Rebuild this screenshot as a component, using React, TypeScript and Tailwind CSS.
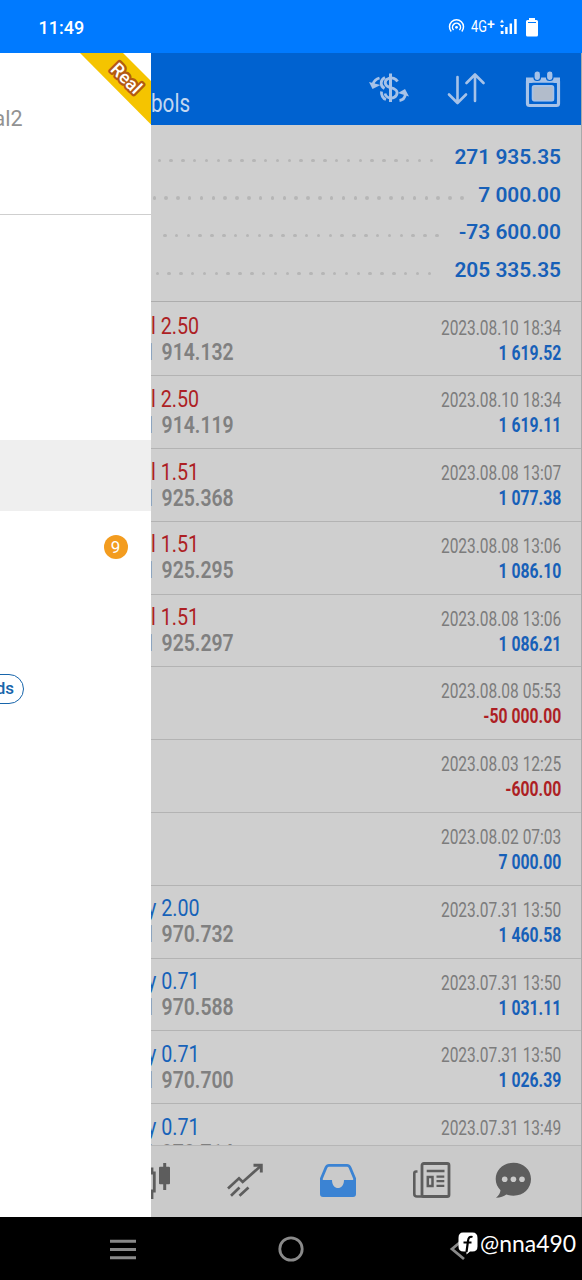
import type { ReactNode } from 'react'

type Deal = {
  side?: 'sell' | 'buy'
  lots?: string
  price?: string
  time: string
  profit: string
}

const summary = [
  { value: '271 935.35', start: 6.5, dots: 24 },
  { value: '7 000.00', start: 1.5, dots: 27 },
  { value: '-73 600.00', start: 12, dots: 24 },
  { value: '205 335.35', start: 4.5, dots: 24 },
]

const deals: Deal[] = [
  { side: 'sell', lots: '2.50', price: '914.132', time: '2023.08.10 18:34', profit: '1 619.52' },
  { side: 'sell', lots: '2.50', price: '914.119', time: '2023.08.10 18:34', profit: '1 619.11' },
  { side: 'sell', lots: '1.51', price: '925.368', time: '2023.08.08 13:07', profit: '1 077.38' },
  { side: 'sell', lots: '1.51', price: '925.295', time: '2023.08.08 13:06', profit: '1 086.10' },
  { side: 'sell', lots: '1.51', price: '925.297', time: '2023.08.08 13:06', profit: '1 086.21' },
  { time: '2023.08.08 05:53', profit: '-50 000.00' },
  { time: '2023.08.03 12:25', profit: '-600.00' },
  { time: '2023.08.02 07:03', profit: '7 000.00' },
  { side: 'buy', lots: '2.00', price: '970.732', time: '2023.07.31 13:50', profit: '1 460.58' },
  { side: 'buy', lots: '0.71', price: '970.588', time: '2023.07.31 13:50', profit: '1 031.11' },
  { side: 'buy', lots: '0.71', price: '970.700', time: '2023.07.31 13:50', profit: '1 026.39' },
  { side: 'buy', lots: '0.71', price: '970.714', time: '2023.07.31 13:49', profit: '1 024.12' },
]

function StatusBar() {
  return (
    <div className="flex h-[53px] shrink-0 items-center bg-[#007aff] pl-[38.5px] text-white">
      <span className="w-[409px] pt-[2px] text-[18px] font-medium">11:49</span>
      <svg width="17" height="17" viewBox="0 0 17 17" fill="none" stroke="white" strokeWidth="1.5">
        <path d="M3.2 13.4A7 7 0 1 1 13.8 13.4" />
        <path d="M5.6 12A4 4 0 1 1 11.4 12" />
        <circle cx="8.5" cy="9.3" r="1.4" fill="white" stroke="none" />
      </svg>
      <span className="ml-[6px] flex w-[25px] items-center pt-px text-[16px]">
        <span className="w-[16.5px]">
          <span className="inline-block origin-left scale-x-[0.8] whitespace-nowrap">4G</span>
        </span>
        <span className="-mt-[7px] text-[14px] leading-none font-medium">+</span>
      </span>
      <svg className="ml-[4px]" width="18" height="17" viewBox="0 0 18 17" fill="white">
        <path d="M0 4.5 2 1.5 4 4.5ZM0 7 2 10 4 7ZM.7 13h2.8v3H.7ZM5.2 9h2.4v7H5.2ZM9.6 5.5H12V16H9.6ZM14.2 1h2.5v15h-2.5Z" />
      </svg>
      <svg className="ml-[7px]" width="14" height="20" viewBox="0 0 14 20" fill="white">
        <path d="M4 1h6v2h1.500A1.500 1.500 0 0 1 13 4.500V18a1.500 1.500 0 0 1-1.500 1.500h-9A1.500 1.500 0 0 1 1 18V4.500A1.500 1.500 0 0 1 2.500 3H4Z" />
        <path d="M3 5.500h8" stroke="#007aff" strokeWidth="1" />
      </svg>
    </div>
  )
}

function Drawer() {
  return (
    <aside className="relative flex w-[151px] shrink-0 flex-col overflow-hidden bg-white">
      <div className="flex h-[161.500px] items-start border-b-[1.5px] border-[#cfcfcf] pt-[53px]">
        <span className="-ml-[6.500px] text-[21.500px] leading-[26px] text-[#929292]">al2</span>
      </div>
      <div className="mt-[225.500px] h-[71px] bg-[#efefef]" />
      <div className="mt-[24px] flex justify-end pr-[23.500px]">
        <span className="flex h-6 w-6 items-center justify-center rounded-full bg-[#f39c1f] pt-px text-[17px] leading-none text-white">
          9
        </span>
      </div>
      <div className="mt-[115px] -ml-10 flex h-[30px] w-16 items-center justify-end rounded-full border-[1.5px] border-[#1765ab] pr-[9px] text-[17px] font-medium text-[#1765ab]">
        ds
      </div>

      {/* Account type ribbon */}
      <svg className="absolute top-0 right-0" width="71" height="72" viewBox="0 0 71 72">
        <path d="M0 0H43L71 28V71.500Z" fill="#f5c400" />
        <text
          transform="translate(46.500 25) rotate(45)"
          textAnchor="middle"
          dominantBaseline="central"
          fontFamily="Roboto, sans-serif"
          fontSize="18"
          fontWeight="500"
          fill="white"
          stroke="#b45a12"
          strokeWidth="4.600"
          strokeLinejoin="round"
          paintOrder="stroke"
        >
          Real
        </text>
      </svg>
    </aside>
  )
}

function Header() {
  return (
    <header className="flex h-[71.500px] shrink-0 items-start bg-[#0062d0] text-[#a6c2e8]">
      <h1 className="w-[217px] pt-[35px] text-[25.500px] leading-[30px] text-[#c3d7f0]">
        <span className="inline-block origin-left scale-x-[0.81]">bols</span>
      </h1>
      <svg className="mt-[18px]" width="42" height="36" viewBox="0 0 42 36" fill="none" stroke="currentColor" strokeWidth="2.800">
        <path d="M22.500 2.500V31" strokeWidth="3" />
        <path d="M29.500 10.500C28 7.500 24 6 20.500 7.500C15.500 9.500 16.500 15 21.500 16.300C27.500 17.600 30.500 20 28.500 24C26 28.500 18.500 28 17 22.500" />
        <path d="M17 6.500C12 9 12 15 16.500 17.500M13.500 20.500C13 24 15 27.500 18 28.500" />
        <path d="M11.500 7C8 8 6 10 5 13" />
        <path d="M1 11 12.500 14 4.500 18Z" fill="currentColor" stroke="none" />
        <path d="M31.500 29.500C35 29 37 26.500 37.500 23" />
        <path d="M30 22 37 18 41 25.500Z" fill="currentColor" stroke="none" />
      </svg>
      <svg className="ml-[37px] mt-[18px]" width="38" height="36" viewBox="0 0 38 36" fill="none" stroke="currentColor" strokeWidth="2.600" strokeLinecap="round" strokeLinejoin="round">
        <path d="M10.500 6V31.500M2 23.500 10.500 32 19 23.500" />
        <path d="M28 30V4M19.500 12 28 3.500 36.500 12" />
      </svg>
      <svg className="ml-[40px] mt-[16.500px]" width="36" height="40" viewBox="0 0 36 40">
        <rect x="2.500" y="9.500" width="31" height="26" rx="2" fill="none" stroke="currentColor" strokeWidth="3.200" />
        <path d="M1 7.500H35V13H1Z" fill="currentColor" />
        <rect x="9" y="1" width="6.500" height="9.500" rx="3" fill="currentColor" stroke="#0062d0" strokeWidth="1.200" />
        <rect x="21.500" y="1" width="6.500" height="9.500" rx="3" fill="currentColor" stroke="#0062d0" strokeWidth="1.200" />
        <rect x="7.500" y="15.800" width="21" height="15" rx="2" fill="#b2bccb" stroke="currentColor" strokeWidth="1.800" />
        <rect x="5.300" y="13.800" width="25.400" height="19" rx="3" fill="none" stroke="#0062d0" strokeWidth="2" />
      </svg>
    </header>
  )
}

function Summary() {
  return (
    <section className="flex h-[177px] shrink-0 flex-col border-b border-[#adadad] pt-[13.500px] pr-[20px]">
      {summary.map(({ value, start, dots }) => (
        <div key={value} className="flex h-[37.700px] items-center">
          <div className="flex shrink-0 gap-[8.330px] pt-[7px]" style={{ marginLeft: start }}>
            {Array.from({ length: dots }, (_, i) => (
              <span key={i} className="h-[3.500px] w-[3.500px] shrink-0 rounded-full bg-[#b6b6b6]" />
            ))}
          </div>
          <span className="ml-auto pt-px text-[20.900px] leading-none font-semibold whitespace-nowrap text-[#1760b8]">
            {value}
          </span>
        </div>
      ))}
    </section>
  )
}

function DealRow({ side, lots, price, time, profit }: Deal) {
  const sell = side === 'sell'

  return (
    <div className="flex h-[72.800px] shrink-0 justify-between border-b-[1.500px] border-[#b3b3b3] pr-[20px]">
      <div className="pt-[9.500px] leading-[26px]">
        {side && (
          <>
            <p
              className={`origin-left scale-x-[0.82] whitespace-nowrap text-[24px] ${
                sell ? 'text-[#ad1f24]' : '-ml-[4px] text-[#1762b9]'
              }`}
            >
              {sell ? 'l' : 'y'} {lots}
            </p>
            <p className="-ml-[7.500px] origin-left scale-x-[0.82] text-[23.700px] font-semibold [word-spacing:2px] whitespace-nowrap text-[#808080]">
              1 {price}
            </p>
          </>
        )}
      </div>
      <div className="pt-[11px] text-right leading-[26px]">
        <p className="origin-right scale-x-[0.775] text-[20px] whitespace-nowrap text-[#7c7c7c]">{time}</p>
        <p
          className={`origin-right scale-x-[0.800] text-[19.700px] font-bold whitespace-nowrap ${
            profit.startsWith('-') ? 'text-[#ad1f24]' : 'text-[#1760b8]'
          }`}
        >
          {profit}
        </p>
      </div>
    </div>
  )
}

function TabIcon({ className, children }: { className?: string; children: ReactNode }) {
  return (
    <svg className={`shrink-0 ${className}`} width="40" height="40" viewBox="0 0 40 40" fill="none" stroke="currentColor">
      {children}
    </svg>
  )
}

function TabBar() {
  return (
    <nav className="flex h-[72px] shrink-0 border-t border-[#b6b6b6] bg-[#cacaca] pt-[14px] text-[#5d5d5d]">
      {/* Chart */}
      <TabIcon className="-ml-[18px]">
        <path d="M19 7.500V13M19 31V39M15 13H21.300V31H15Z" strokeWidth="2.800" />
        <path d="M31.700 3V30" strokeWidth="3" />
        <rect x="26" y="6.700" width="11" height="17.500" rx="1" fill="currentColor" stroke="none" />
      </TabIcon>
      {/* Trade */}
      <TabIcon className="ml-[52px]">
        <path d="M3 28.500 14 18.300 17.700 22 36 5.700M6 35.700 14.500 27.500M14.500 35.700 23.500 27.500" strokeWidth="2.700" />
        <path d="M28.500 5.300H36.300V12.500" strokeWidth="2.900" />
      </TabIcon>
      {/* History */}
      <TabIcon className="ml-[53px] text-[#3b83d3]">
        <path d="M11 5.300H29Q31 5.300 32 7.500L36.600 18.500V34Q36.600 35.500 35 35.500H5Q3.400 35.500 3.400 34V18.500L8 7.500Q9 5.300 11 5.300Z" strokeWidth="2.800" />
        <path d="M3 20H14C14 30.700 26 30.700 26 20H37V36H3Z" fill="currentColor" stroke="none" />
      </TabIcon>
      {/* News */}
      <TabIcon className="ml-[53px]">
        <rect x="11" y="3.500" width="27" height="33" rx="1.800" strokeWidth="2.800" />
        <path d="M6.500 11.500H5Q3.300 11.500 3.300 13.200V34Q3.300 36.500 6 36.500H13" strokeWidth="2.600" />
        <path d="M15.700 11H33.500M25.500 16.600H33.300M25.500 21.200H33.300M25.500 25.800H33.300" strokeWidth="2.300" />
        <rect x="16.800" y="17" width="4.700" height="9" strokeWidth="2.500" />
      </TabIcon>
      {/* Chat */}
      <TabIcon className="ml-[43px]">
        <path d="M19.500 2.700C9.500 2.700 1.700 9.800 1.700 19C1.700 23.500 3.500 27.300 6.500 30.200C6.300 33 4.800 35.500 2 37.700C6.500 37.700 10 36.500 12.300 34.500C14.500 35.300 17 35.700 19.500 35.700C29.500 35.700 37 28.500 37 19C37 9.800 29.500 2.700 19.500 2.700Z" fill="currentColor" stroke="none" />
        <g fill="#cacaca" stroke="none">
          <circle cx="10.700" cy="19.300" r="2.800" />
          <circle cx="19.400" cy="19.300" r="2.800" />
          <circle cx="28" cy="19.300" r="2.800" />
        </g>
      </TabIcon>
    </nav>
  )
}

function SystemNav() {
  return (
    <div className="relative flex h-[63px] shrink-0 items-center bg-black text-[#8a8a8a]">
      <svg className="ml-[110px]" width="26" height="22" viewBox="0 0 26 22" stroke="currentColor" strokeWidth="3">
        <path d="M0 3.200H26M0 11.500H26M0 19.800H26" />
      </svg>
      <svg className="ml-[142px]" width="26" height="26" viewBox="0 0 26 26" fill="none" stroke="currentColor" strokeWidth="2.800">
        <circle cx="13" cy="13" r="11.200" />
      </svg>
      <svg className="ml-[145px]" width="18" height="24" viewBox="0 0 18 24" fill="none" stroke="currentColor" strokeWidth="2.800">
        <path d="M15 2 3 12 15 22" />
      </svg>

      {/* Watermark */}
      <div className="absolute top-[14px] left-[457px] flex items-center text-white">
        <svg width="22" height="24" viewBox="0 0 22 24">
          <path d="M6 1.500H15.500Q20.500 1.500 20.500 7V15.500Q20.500 20.500 15.500 20.500H13L9.500 23.500V20.500H6.500Q1.500 20.500 1.500 15.500V7Q1.500 1.500 6 1.500Z" fill="white" />
          <path d="M15.500 6C12.500 5 11.300 7 11 10L9.500 21M6.500 11.500H14.500" fill="none" stroke="black" strokeWidth="2.200" />
        </svg>
        <span className="ml-px w-[96px] font-[Lato,sans-serif] text-[24px] leading-6">
          <span className="inline-block origin-left scale-x-[0.955]">@nna490</span>
        </span>
      </div>
    </div>
  )
}

export default function App() {
  return (
    <div className="flex h-[1280px] w-[582px] flex-col overflow-hidden font-[Roboto,sans-serif]">
      <StatusBar />
      <div className="flex min-h-0 flex-1">
        <Drawer />
        <main className="flex min-w-0 flex-1 flex-col overflow-hidden border-r border-[#a9a9a9] bg-[#cfcfcf]">
          <Header />
          <Summary />
          <div className="flex min-h-0 flex-1 flex-col overflow-hidden pt-[2px]">
            {deals.map((deal, i) => (
              <DealRow key={i} {...deal} />
            ))}
          </div>
          <TabBar />
        </main>
      </div>
      <SystemNav />
    </div>
  )
}
